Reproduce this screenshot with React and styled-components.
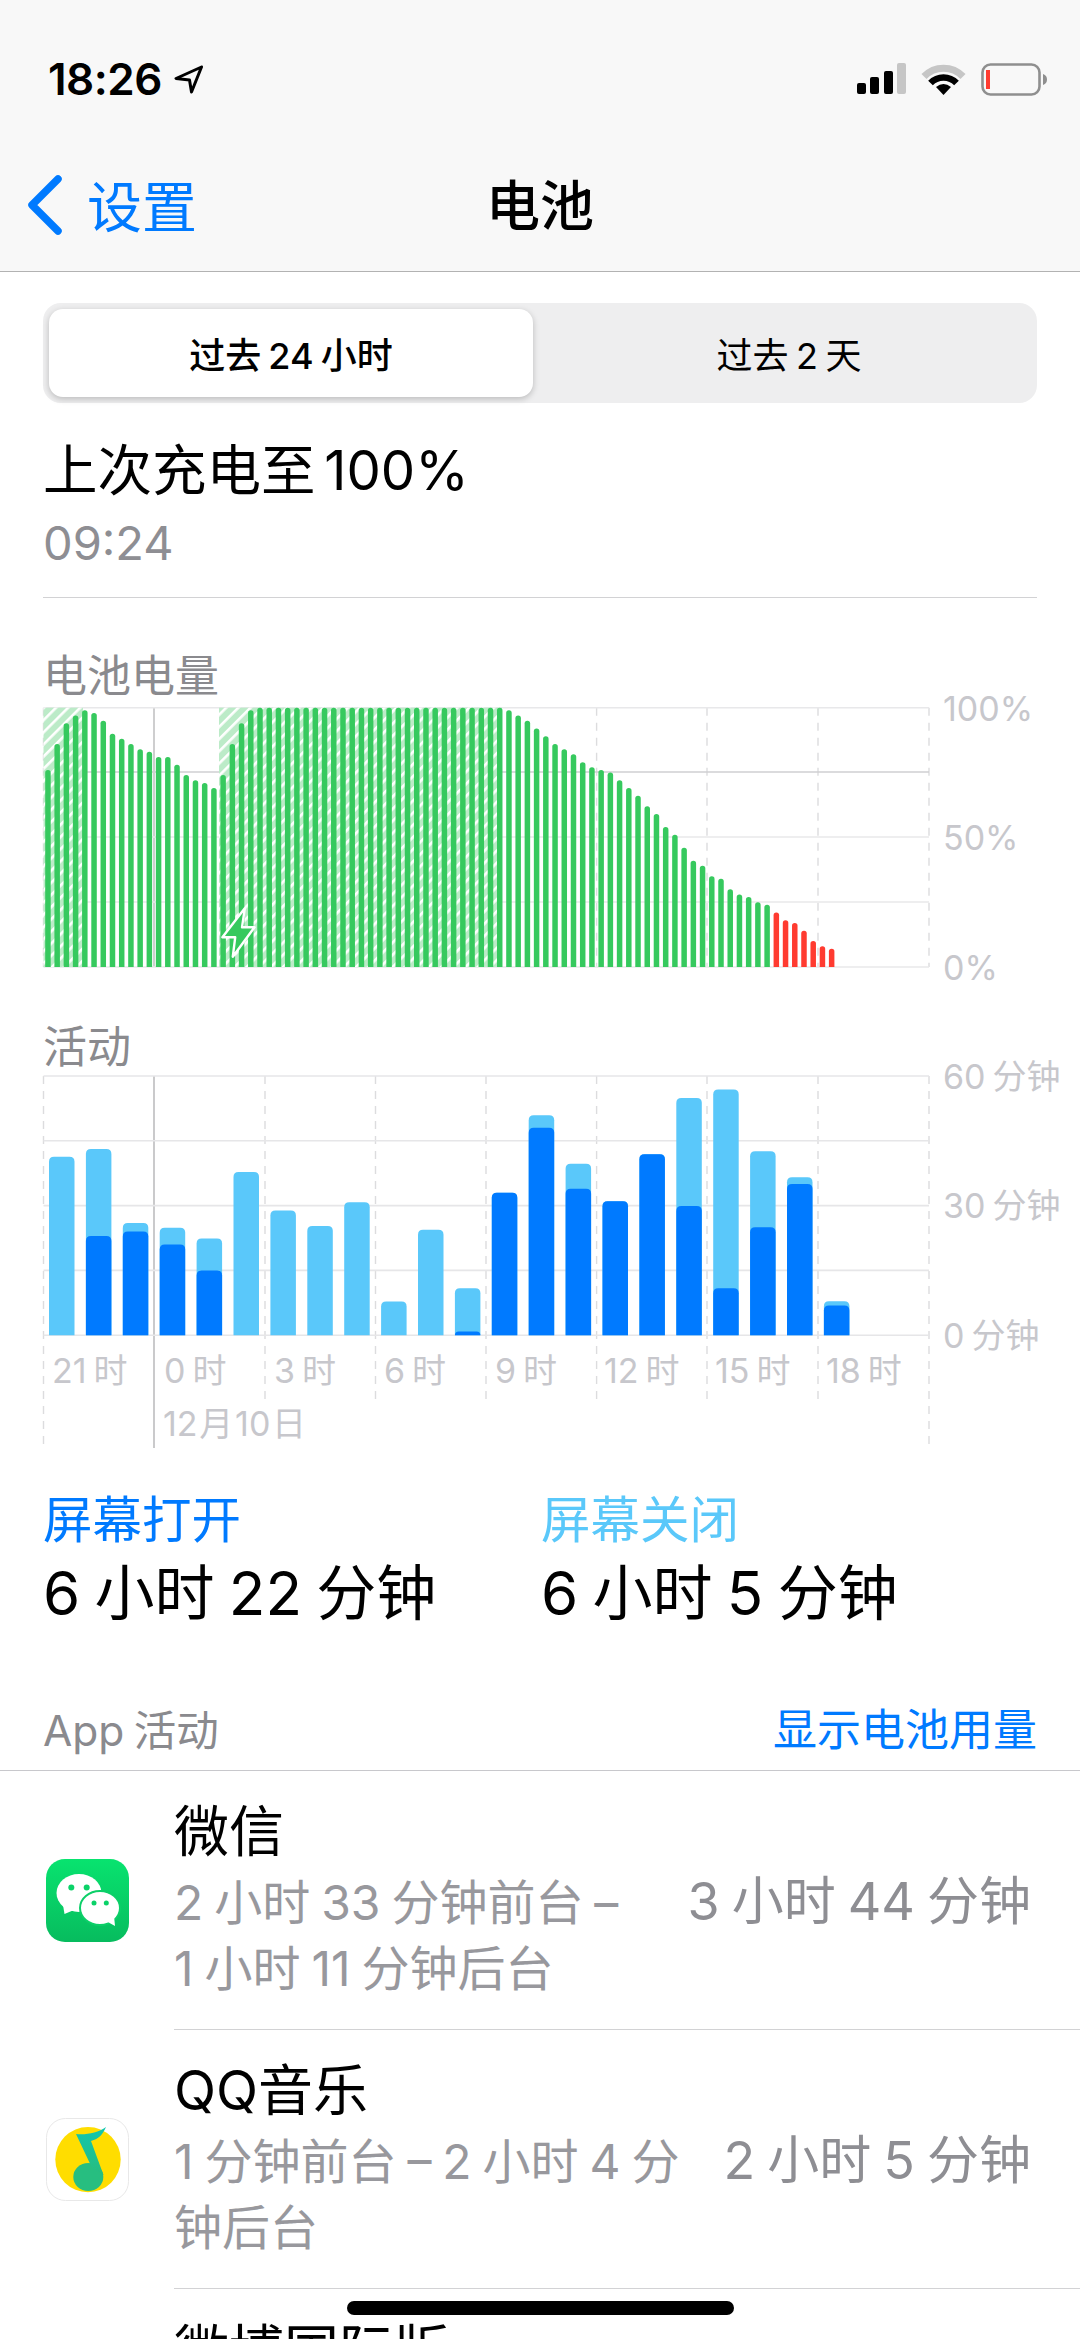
import React from "react";
import styled, { createGlobalStyle } from "styled-components";

const BLUE = "#007aff";
const SKY = "#5ac8fa";
const GREEN = "#36c95e";
const RED = "#ff3b30";

// battery level per 15 minutes, oldest first
const levels = [
  76, 86, 94, 97, 99, 98, 95, 90, 88, 86, 84, 83, 81, 81, 78, 74, 72, 71, 69, 74, 86, 94, 99,
  ...Array(27).fill(100),
  99, 97, 95, 92, 89, 86, 84, 82, 79, 77, 76, 75, 72, 69, 66, 62, 59, 54, 51, 46, 41, 39, 35, 34,
  30, 28, 27, 25, 24, 21, 18, 17, 14, 10, 8, 7,
];

// hourly usage in minutes: [total, screen on]
const usage = [
  [41.3, 0], [43.1, 23], [26, 24], [24.9, 21], [22.4, 15], [37.8, 0], [28.9, 0], [25.3, 0],
  [30.8, 0], [7.8, 0], [24.4, 0], [10.9, 0.9], [33, 33], [50.9, 48], [39.7, 33.9], [31, 31],
  [41.9, 41.9], [54.9, 29.9], [56.9, 10.9], [42.6, 25], [36.6, 35], [7.9, 6.9],
];

const hourTicks = [
  ["21 时", 52],
  ["0 时", 164],
  ["3 时", 274],
  ["6 时", 384],
  ["9 时", 495],
  ["12 时", 604],
  ["15 时", 715],
  ["18 时", 826],
];

const gridX = [43.5, 154, 265, 375.5, 486, 596.6, 707, 818, 929];

const topRounded = (x, y, w, bottom, r) =>
  `M${x} ${bottom}V${y + r}Q${x} ${y} ${x + r} ${y}H${x + w - r}Q${x + w} ${y} ${x + w} ${y + r}V${bottom}Z`;

function BatteryChart() {
  const top = 6.7;
  const bottom = 266;
  const scale = (bottom - top) / 100;
  return (
    <ChartSvg width="1080" height="285" viewBox="0 0 1080 285">
      <defs>
        <pattern id="charge" width="8.6" height="8.6" patternUnits="userSpaceOnUse" patternTransform="rotate(45)">
          <rect width="8.6" height="8.6" fill="#bcebc8" />
          <rect width="2.6" height="8.6" fill="#fff" />
        </pattern>
      </defs>
      {gridX.map((x, i) =>
        i === 1 ? (
          <line key={x} x1={x} x2={x} y1={top} y2={bottom} stroke="#b9b9bb" strokeWidth="1.4" />
        ) : (
          <line key={x} x1={x} x2={x} y1={top} y2={bottom} stroke="#dcdcde" strokeWidth="1.4" strokeDasharray="8 7" />
        )
      )}
      <line x1="43.5" x2="929" y1={top} y2={top} stroke="#e8e8ea" strokeWidth="1.6" />
      <line x1="43.5" x2="929" y1="71" y2="71" stroke="#cfcfd2" strokeWidth="1.4" />
      <line x1="43.5" x2="929" y1="136" y2="136" stroke="#e8e8ea" strokeWidth="1.6" />
      <line x1="43.5" x2="929" y1="201" y2="201" stroke="#e8e8ea" strokeWidth="1.6" />
      <line x1="43.5" x2="929" y1={bottom} y2={bottom} stroke="#e8e8ea" strokeWidth="1.6" />
      <rect x="43.5" y={top} width="39.5" height={bottom - top} fill="url(#charge)" />
      <rect x="219" y={top} width="283" height={bottom - top} fill="url(#charge)" />
      {levels.map((level, i) => (
        <path
          key={i}
          d={topRounded(45.2 + i * 9.22, bottom - level * scale, 5.5, bottom, 2.7)}
          fill={level <= 21 ? RED : GREEN}
        />
      ))}
      <path
        d="M244.8 207.3L222.4 236.3H235.2L232.8 255.7L254.5 226.3H242Z"
        fill={GREEN}
        stroke="#fff"
        strokeWidth="2.4"
        strokeLinejoin="round"
      />
      <AxisText x="943" y={top + 1}>100%</AxisText>
      <AxisText x="943" y="136">50%</AxisText>
      <AxisText x="943" y={bottom}>0%</AxisText>
    </ChartSvg>
  );
}

function ActivityChart() {
  const top = 7;
  const bottom = 266.3;
  const scale = (bottom - top) / 60;
  return (
    <ChartSvg width="1080" height="380" viewBox="0 0 1080 380">
      {gridX.map((x, i) => {
        const edge = i === 0 || i === 8;
        if (i === 1) {
          return <line key={x} x1={x} x2={x} y1={top} y2="379" stroke="#b4b4b6" strokeWidth="1.4" />;
        }
        return (
          <line
            key={x}
            x1={x}
            x2={x}
            y1={top}
            y2={edge ? 379 : 331}
            stroke="#dcdcde"
            strokeWidth="1.4"
            strokeDasharray="8 7"
          />
        );
      })}
      {[0, 1, 2, 3, 4].map((n) => {
        const y = top + n * 64.8;
        return <line key={n} x1="43.5" x2="929" y1={y} y2={y} stroke="#e6e6e8" strokeWidth="1.6" />;
      })}
      {usage.map(([total, screen], i) => {
        const x = 49 + i * 36.9;
        return (
          <g key={i}>
            <path d={topRounded(x, bottom - total * scale, 25.5, bottom, 5)} fill={SKY} />
            {screen > 0 && (
              <path
                d={topRounded(x, bottom - screen * scale, 25.5, bottom, Math.min(5, screen * scale))}
                fill={BLUE}
              />
            )}
          </g>
        );
      })}
      <AxisText x="943" y={top}>60 分钟</AxisText>
      <AxisText x="943" y={top + 129.6}>30 分钟</AxisText>
      <AxisText x="943" y={bottom}>0 分钟</AxisText>
      {hourTicks.map(([label, x]) => (
        <AxisText key={label} x={x} y="301">{label}</AxisText>
      ))}
      <DateText x="163" y="354">12 月 10 日</DateText>
    </ChartSvg>
  );
}

function WeChatIcon() {
  return (
    <AppIcon viewBox="0 0 83 83">
      <defs>
        <linearGradient id="wechat" x1="0" y1="0" x2="0" y2="1">
          <stop offset="0" stopColor="#08e36f" />
          <stop offset="1" stopColor="#07bc5e" />
        </linearGradient>
      </defs>
      <rect width="83" height="83" rx="19" fill="url(#wechat)" />
      <ellipse cx="33" cy="34" rx="22.5" ry="19" fill="#fff" />
      <path d="M17 46L18.5 55L28 51Z" fill="#fff" />
      <circle cx="25.3" cy="28.5" r="3" fill="#0bd268" />
      <circle cx="40.7" cy="28.5" r="3" fill="#0bd268" />
      <ellipse cx="54" cy="49" rx="20" ry="17" fill="#fff" stroke="#0ccf68" strokeWidth="2" />
      <path d="M60 62L69 67L68 57Z" fill="#fff" />
      <circle cx="48" cy="44" r="2.5" fill="#0bd268" />
      <circle cx="60.3" cy="44" r="2.5" fill="#0bd268" />
    </AppIcon>
  );
}

function QQMusicIcon() {
  return (
    <AppIcon viewBox="0 0 83 83">
      <defs>
        <linearGradient id="note" x1="0" y1="0" x2="0" y2="1">
          <stop offset="0" stopColor="#12c6b0" />
          <stop offset="1" stopColor="#28bd7c" />
        </linearGradient>
      </defs>
      <rect x="0.5" y="0.5" width="82" height="82" rx="19" fill="#fff" stroke="#e8e8e8" />
      <circle cx="42" cy="41.6" r="32.7" fill="#ffdd00" />
      <ellipse cx="42.3" cy="59" rx="15" ry="14" fill="#27be80" />
      <path d="M30 16C40 17 52 15 60 9C57 16 53 21 45 23L57.5 57L47 52Z" fill="url(#note)" />
    </AppIcon>
  );
}

export default function App() {
  return (
    <Page>
      <GlobalStyle />
      <Header>
        <StatusBar>
          <StatusLeft>
            <Clock>18:26</Clock>
            <svg width="29" height="29" viewBox="0 0 29 29">
              <path d="M27.5 2L2 13.5L15.5 15L17.5 27Z" fill="none" stroke="#000" strokeWidth="3" strokeLinejoin="round" />
            </svg>
          </StatusLeft>
          <StatusRight>
            <svg width="49" height="32" viewBox="0 0 49 32">
              <rect x="0" y="20" width="9" height="11" rx="2" fill="#000" />
              <rect x="13" y="14" width="9" height="17" rx="2" fill="#000" />
              <rect x="27" y="8" width="9" height="23" rx="2" fill="#000" />
              <rect x="40" y="0" width="9" height="31" rx="2" fill="#c6c6c6" />
            </svg>
            <svg width="45" height="32" viewBox="0 0 45 32">
              <path d="M3 13.5A27 27 0 0 1 42 13.5" fill="none" stroke="#c6c6c6" strokeWidth="7" />
              <path d="M9.5 20A18 18 0 0 1 35.5 20" fill="none" stroke="#000" strokeWidth="6.5" />
              <path d="M22.5 32L15 24Q22.5 18 30 24Z" fill="#000" />
            </svg>
            <svg width="67" height="33" viewBox="0 0 67 33">
              <rect x="1.5" y="1.5" width="57" height="30" rx="8" fill="none" stroke="#8f8f8f" strokeWidth="2.6" />
              <rect x="5" y="7" width="4" height="19" fill={RED} />
              <path d="M62 11C65 12 66 14 66 16.500C66 19 65 21 62 22Z" fill="#8f8f8f" />
            </svg>
          </StatusRight>
        </StatusBar>
        <NavBar>
          <BackLink>
            <svg width="35" height="60" viewBox="0 0 35 60">
              <polyline points="31,4 5,30 31,56" fill="none" stroke={BLUE} strokeWidth="7.500" strokeLinecap="round" strokeLinejoin="round" />
            </svg>
            <BackLabel>设置</BackLabel>
          </BackLink>
          <NavTitle>电池</NavTitle>
        </NavBar>
      </Header>

      <Segmented>
        <SegmentItem $active>过去 24 小时</SegmentItem>
        <SegmentItem $inset>过去 2 天</SegmentItem>
      </Segmented>

      <ChargeSummary>
        <ChargeTitle>上次充电至 100%</ChargeTitle>
        <ChargeTime>09:24</ChargeTime>
      </ChargeSummary>

      <ChartHeading>电池电量</ChartHeading>
      <BatteryChart />
      <ChartHeading $second>活动</ChartHeading>
      <ActivityChart />

      <ScreenTotals>
        <TotalBlock>
          <TotalLabel $color={BLUE}>屏幕打开</TotalLabel>
          <TotalValue>6 小时 22 分钟</TotalValue>
        </TotalBlock>
        <TotalBlock>
          <TotalLabel $color={SKY}>屏幕关闭</TotalLabel>
          <TotalValue>6 小时 5 分钟</TotalValue>
        </TotalBlock>
      </ScreenTotals>

      <ListHeader>
        <ListTitle>App 活动</ListTitle>
        <ListAction>显示电池用量</ListAction>
      </ListHeader>

      <AppRow>
        <WeChatIcon />
        <RowBody>
          <RowText>
            <AppName>微信</AppName>
            <AppDetail>
              2 小时 33 分钟前台 –<br />1 小时 11 分钟后台
            </AppDetail>
          </RowText>
          <AppTotal>3 小时 44 分钟</AppTotal>
        </RowBody>
      </AppRow>
      <AppRow>
        <QQMusicIcon />
        <RowBody>
          <RowText>
            <AppName>QQ音乐</AppName>
            <AppDetail>
              1 分钟前台 – 2 小时 4 分<br />钟后台
            </AppDetail>
          </RowText>
          <AppTotal>2 小时 5 分钟</AppTotal>
        </RowBody>
      </AppRow>
      <ClippedRow>
        <AppName>微博国际版</AppName>
      </ClippedRow>

      <HomeBar />
    </Page>
  );
}

const GlobalStyle = createGlobalStyle`
  html, body {
    margin: 0;
    padding: 0;
    background: #fff;
  }
  * {
    box-sizing: border-box;
  }
`;

const Page = styled.div`
  position: relative;
  width: 1080px;
  height: 2339px;
  overflow: hidden;
  background: #fff;
  color: #000;
  font-family: Inter, "Noto Sans CJK SC", sans-serif;
  word-spacing: -0.16em;
  white-space: nowrap;
`;

const Header = styled.header`
  height: 272px;
  background: #f8f8f8;
  border-bottom: 1.5px solid #b2b2b2;
`;

const StatusBar = styled.div`
  height: 130px;
  padding: 28px 32px 0 48px;
  display: flex;
  justify-content: space-between;
  align-items: center;
`;

const StatusLeft = styled.div`
  display: flex;
  align-items: center;
  gap: 12px;
`;

const Clock = styled.span`
  font-size: 44px;
  font-weight: 600;
  letter-spacing: -0.5px;
`;

const StatusRight = styled.div`
  display: flex;
  align-items: center;
  gap: 15px;
`;

const NavBar = styled.nav`
  height: 141px;
  padding: 9px 27px 0;
  display: grid;
  grid-template-columns: 1fr auto 1fr;
  align-items: center;
`;

const BackLink = styled.div`
  display: flex;
  align-items: center;
  gap: 25px;
  color: ${BLUE};
  font-size: 55px;
`;

const BackLabel = styled.span`
  padding-bottom: 5px;
`;

const NavTitle = styled.div`
  padding-bottom: 5px;
  font-size: 54px;
  font-weight: 500;
`;

const Segmented = styled.div`
  margin: 31px 43px 0;
  height: 100px;
  padding: 6px;
  display: grid;
  grid-template-columns: 484px 1fr;
  background: #eeeeef;
  border-radius: 18px;
`;

const SegmentItem = styled.div`
  display: flex;
  align-items: center;
  justify-content: center;
  padding-left: ${(p) => (p.$inset ? "14px" : "0")};
  font-size: 36px;
  font-weight: ${(p) => (p.$active ? 500 : 400)};
  border-radius: 14px;
  background: ${(p) => (p.$active ? "#fff" : "transparent")};
  box-shadow: ${(p) => (p.$active ? "0 2px 6px rgba(0, 0, 0, 0.22)" : "none")};
`;

const ChargeSummary = styled.section`
  margin: 33px 43px 0;
  height: 162px;
  border-bottom: 1.5px solid #d2d2d4;
`;

const ChargeTitle = styled.div`
  font-size: 54.5px;
  line-height: 68px;
  word-spacing: -0.12em;
`;

const ChargeTime = styled.div`
  margin-top: 3px;
  font-size: 47px;
  line-height: 72px;
  color: #8e8e93;
`;

const ChartHeading = styled.div`
  margin: ${(p) => (p.$second ? "33px" : "53px")} 0 0 43px;
  height: 50px;
  font-size: 44px;
  line-height: ${(p) => (p.$second ? "56px" : "50px")};
  color: #8a8a8e;
`;

const ChartSvg = styled.svg`
  display: block;
  overflow: visible;
`;

const AxisText = styled.text`
  font-size: 34px;
  fill: #c7c7cc;
  dominant-baseline: central;
`;

const DateText = styled(AxisText)`
  word-spacing: -0.23em;
`;

const ScreenTotals = styled.section`
  margin: 41px 43px 0;
  display: grid;
  grid-template-columns: 498px 1fr;
`;

const TotalBlock = styled.div`
  display: flex;
  flex-direction: column;
  gap: 5px;
`;

const TotalLabel = styled.div`
  font-size: 49.5px;
  line-height: 60px;
  color: ${(p) => p.$color};
`;

const TotalValue = styled.div`
  font-size: 60px;
  line-height: 76px;
`;

const ListHeader = styled.div`
  margin-top: 69px;
  height: 71px;
  padding: 0 43px 16px;
  display: flex;
  justify-content: space-between;
  align-items: center;
  border-bottom: 1.5px solid #c8c8cc;
`;

const ListTitle = styled.div`
  font-size: 42.5px;
  color: #8a8a8e;
`;

const ListAction = styled.div`
  font-size: 44px;
  color: ${BLUE};
`;

const AppRow = styled.div`
  height: 259px;
  padding-left: 46px;
  display: flex;
  align-items: center;
  gap: 45px;
`;

const AppIcon = styled.svg`
  flex: none;
  width: 83px;
  height: 83px;
`;

const RowBody = styled.div`
  flex: 1;
  align-self: stretch;
  padding-right: 49px;
  display: flex;
  align-items: center;
  justify-content: space-between;
  border-bottom: 1.5px solid #d2d2d4;
`;

const RowText = styled.div`
  display: flex;
  flex-direction: column;
  gap: 7px;
`;

const AppName = styled.div`
  font-size: 55px;
  line-height: 64px;
`;

const AppDetail = styled.div`
  font-size: 48px;
  line-height: 66px;
  color: #98989d;
`;

const AppTotal = styled.div`
  font-size: 52px;
  padding-bottom: 6px;
  color: #8e8e93;
`;

const ClippedRow = styled.div`
  padding: 29px 0 0 174px;
`;

const HomeBar = styled.div`
  position: absolute;
  left: 347px;
  bottom: 24px;
  width: 387px;
  height: 14px;
  border-radius: 7px;
  background: #000;
`;
